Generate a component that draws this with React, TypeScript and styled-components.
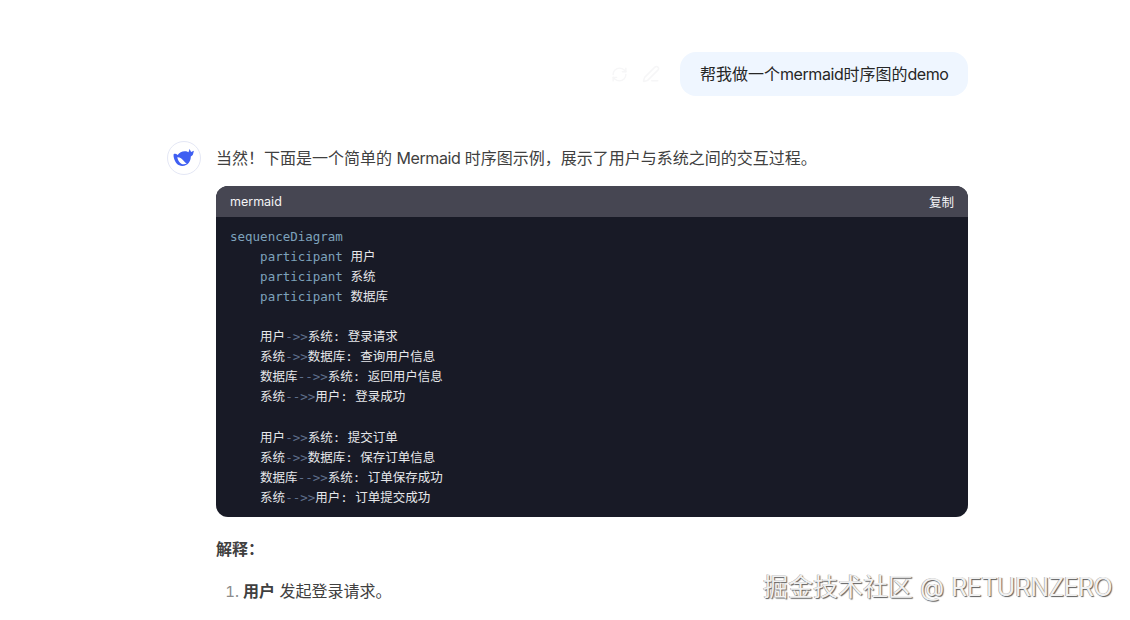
import React from "react";
import styled, { createGlobalStyle } from "styled-components";
import { RefreshCw, PenLine } from "lucide-react";

const GlobalStyle = createGlobalStyle`
  html, body {
    margin: 0;
    padding: 0;
    background: #fff;
    overflow: hidden;
  }
  body {
    font-family: Inter, "Noto Sans CJK SC", sans-serif;
  }
`;

const Page = styled.div`
  position: relative;
  width: 1130px;
  height: 620px;
  overflow: hidden;
  padding: 52px 0 0 167px;
  box-sizing: border-box;
`;

const Column = styled.div`
  width: 801px;
`;

const UserRow = styled.div`
  display: flex;
  justify-content: flex-end;
  align-items: center;
  height: 44px;
`;

const FaintIcons = styled.div`
  display: flex;
  align-items: center;
  gap: 14px;
  margin-right: 20px;
  color: #f6f6f7;
`;

const Bubble = styled.div`
  height: 44px;
  width: 288px;
  box-sizing: border-box;
  padding-left: 20px;
  border-radius: 16px;
  background: #eff6ff;
  color: #262626;
  font-size: 16px;
  line-height: 44px;
  white-space: nowrap;
`;

const Latin = styled.span`
  letter-spacing: -0.42px;
`;

const AssistantRow = styled.div`
  display: flex;
  gap: 15px;
  margin-top: 44px;
`;

const Avatar = styled.div`
  flex: none;
  width: 34px;
  height: 34px;
  margin-top: 1px;
  box-sizing: border-box;
  border: 1px solid #e4e7f5;
  border-radius: 50%;
  display: flex;
  align-items: center;
  justify-content: center;
`;

const Content = styled.div`
  width: 752px;
`;

const Intro = styled.p`
  margin: 0;
  color: #404040;
  font-size: 16px;
  line-height: 36px;
  white-space: nowrap;
`;

const CodeCard = styled.div`
  margin-top: 10px;
  border-radius: 12px;
  overflow: hidden;
  background: #181a26;
`;

const CodeHeader = styled.div`
  height: 31px;
  display: flex;
  align-items: center;
  justify-content: space-between;
  padding: 0 14px;
  background: #464652;
  color: #f4f4f6;
  font-size: 12.5px;
`;

const Code = styled.pre`
  margin: 0;
  height: 300px;
  box-sizing: border-box;
  padding: 9.6px 14px 0;
  color: #e6e7ea;
  font-family: "DejaVu Sans Mono", "Noto Sans CJK SC", monospace;
  font-size: 12.5px;
  line-height: 20.1px;
`;

const Keyword = styled.span`
  color: #7ea2bc;
`;

const Arrow = styled.span`
  color: #5f6f8c;
`;

const Heading = styled.h3`
  margin: 18px 0 0;
  color: #404040;
  font-size: 16px;
  font-weight: 700;
  line-height: 28px;
`;

const Steps = styled.ol`
  margin: 14px 0 0;
  padding: 0 0 0 27px;
  color: #404040;
  font-size: 16px;
  line-height: 28px;

  li::marker {
    color: #8b8b8b;
    font-size: 15px;
  }

  b {
    font-weight: 700;
  }
`;

const Watermark = styled.div`
  position: absolute;
  left: 763px;
  top: 569px;
  color: #f1f1f1;
  font-size: 25px;
  line-height: 36px;
  white-space: nowrap;
  text-shadow: 1px 1px 1px #5e5e5e, -0.5px -0.5px 0 #9a9a9a;
`;

const WatermarkName = styled.span`
  letter-spacing: -0.6px;
`;

type Line = { from: string; arrow: string; to: string; msg: string };

const firstFlow: Line[] = [
  { from: "用户", arrow: "->>", to: "系统", msg: "登录请求" },
  { from: "系统", arrow: "->>", to: "数据库", msg: "查询用户信息" },
  { from: "数据库", arrow: "-->>", to: "系统", msg: "返回用户信息" },
  { from: "系统", arrow: "-->>", to: "用户", msg: "登录成功" },
];

const secondFlow: Line[] = [
  { from: "用户", arrow: "->>", to: "系统", msg: "提交订单" },
  { from: "系统", arrow: "->>", to: "数据库", msg: "保存订单信息" },
  { from: "数据库", arrow: "-->>", to: "系统", msg: "订单保存成功" },
  { from: "系统", arrow: "-->>", to: "用户", msg: "订单提交成功" },
];

function Flow({ lines }: { lines: Line[] }) {
  return (
    <>
      {lines.map((l) => (
        <React.Fragment key={l.msg}>
          {"    "}
          {l.from}
          <Arrow>{l.arrow}</Arrow>
          {l.to}: {l.msg}
          {"\n"}
        </React.Fragment>
      ))}
    </>
  );
}

function WhaleLogo() {
  return (
    <svg width="22" height="20" viewBox="0 0 22 20">
      <path
        fill="#3f5ff2"
        d="M.6 6.200C2 5.200 3.400 5.800 4.600 7 6.500 4.200 9.800 2.700 13.200 3.300c.9.200 1.700.5 2.300 1L16.600 1l1.500 3 2.800-1.300-.8 3.300c-.4 1.300-1.300 2.100-2.300 2.500.1 4.800-3 9.300-8.300 9.500C5.300 18.200 1.900 14.500.9 10 .6 8.700.4 7.400.6 6.200z"
      />
      <path
        fill="#fff"
        d="M4.300 9.300c2.500-.2 4.800 1.500 6.300 3.400 1.100 1.400 2.100 2.300 3.100 2.800-1.800 1-4.100 1-5.800-.1-2-1.300-3.300-3.700-3.600-6.100z"
      />
    </svg>
  );
}

export default function App() {
  return (
    <>
      <GlobalStyle />
      <Page>
        <Column>
          <UserRow>
            <FaintIcons>
              <RefreshCw size={17} />
              <PenLine size={18} />
            </FaintIcons>
            <Bubble>
              帮我做一个<Latin>mermaid</Latin>时序图的<Latin>demo</Latin>
            </Bubble>
          </UserRow>
          <AssistantRow>
            <Avatar>
              <WhaleLogo />
            </Avatar>
            <Content>
              <Intro>
                当然！下面是一个简单的 <Latin>Mermaid</Latin> 时序图示例，展示了用户与系统之间的交互过程。
              </Intro>
              <CodeCard>
                <CodeHeader>
                  <span>mermaid</span>
                  <span>复制</span>
                </CodeHeader>
                <Code>
                  <Keyword>sequenceDiagram</Keyword>
                  {"\n    "}
                  <Keyword>participant</Keyword> 用户
                  {"\n    "}
                  <Keyword>participant</Keyword> 系统
                  {"\n    "}
                  <Keyword>participant</Keyword> 数据库
                  {"\n\n"}
                  <Flow lines={firstFlow} />
                  {"\n"}
                  <Flow lines={secondFlow} />
                </Code>
              </CodeCard>
              <Heading>解释：</Heading>
              <Steps>
                <li>
                  <b>用户</b> 发起登录请求。
                </li>
              </Steps>
            </Content>
          </AssistantRow>
        </Column>
        <Watermark>
          掘金技术社区 @ <WatermarkName>RETURNZERO</WatermarkName>
        </Watermark>
      </Page>
    </>
  );
}
